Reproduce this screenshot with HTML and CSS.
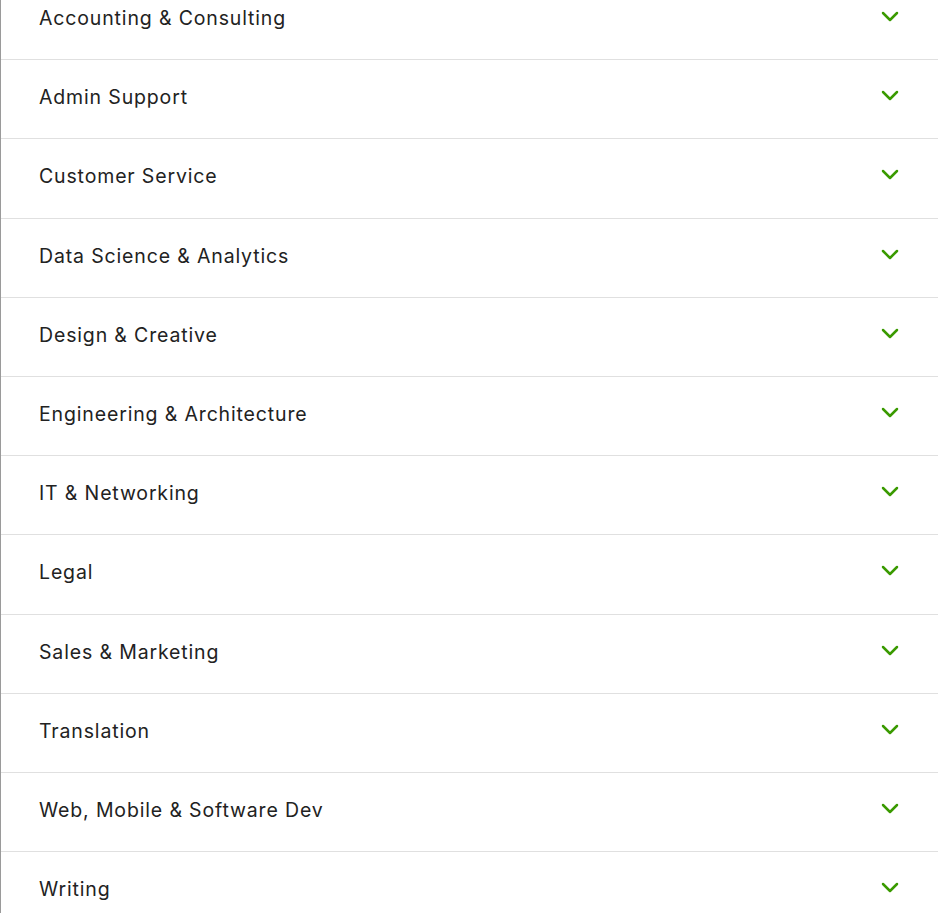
FILE: index.html
```html
<!DOCTYPE html>
<html lang="en">
<head>
  <meta charset="UTF-8">
  <title>Categories</title>
  <link rel="stylesheet" href="styles.css">
</head>
<body>

  <div class="categories">
    <div class="category">
      <span class="category-name">Accounting &amp; Consulting</span>
      <svg class="chevron" viewBox="0 0 18 11"><path d="M2 2 L9 9 L16 2"/></svg>
    </div>
    <div class="category">
      <span class="category-name">Admin Support</span>
      <svg class="chevron" viewBox="0 0 18 11"><path d="M2 2 L9 9 L16 2"/></svg>
    </div>
    <div class="category">
      <span class="category-name">Customer Service</span>
      <svg class="chevron" viewBox="0 0 18 11"><path d="M2 2 L9 9 L16 2"/></svg>
    </div>
    <div class="category">
      <span class="category-name">Data Science &amp; Analytics</span>
      <svg class="chevron" viewBox="0 0 18 11"><path d="M2 2 L9 9 L16 2"/></svg>
    </div>
    <div class="category">
      <span class="category-name">Design &amp; Creative</span>
      <svg class="chevron" viewBox="0 0 18 11"><path d="M2 2 L9 9 L16 2"/></svg>
    </div>
    <div class="category">
      <span class="category-name">Engineering &amp; Architecture</span>
      <svg class="chevron" viewBox="0 0 18 11"><path d="M2 2 L9 9 L16 2"/></svg>
    </div>
    <div class="category">
      <span class="category-name">IT &amp; Networking</span>
      <svg class="chevron" viewBox="0 0 18 11"><path d="M2 2 L9 9 L16 2"/></svg>
    </div>
    <div class="category">
      <span class="category-name">Legal</span>
      <svg class="chevron" viewBox="0 0 18 11"><path d="M2 2 L9 9 L16 2"/></svg>
    </div>
    <div class="category">
      <span class="category-name">Sales &amp; Marketing</span>
      <svg class="chevron" viewBox="0 0 18 11"><path d="M2 2 L9 9 L16 2"/></svg>
    </div>
    <div class="category">
      <span class="category-name">Translation</span>
      <svg class="chevron" viewBox="0 0 18 11"><path d="M2 2 L9 9 L16 2"/></svg>
    </div>
    <div class="category">
      <span class="category-name">Web, Mobile &amp; Software Dev</span>
      <svg class="chevron" viewBox="0 0 18 11"><path d="M2 2 L9 9 L16 2"/></svg>
    </div>
    <div class="category">
      <span class="category-name">Writing</span>
      <svg class="chevron" viewBox="0 0 18 11"><path d="M2 2 L9 9 L16 2"/></svg>
    </div>
  </div>

</body>
</html>
```

FILE: styles.css
```css
* {
  box-sizing: border-box;
}

body {
  margin: 0;
  padding: 0;
  background: #fff;
  font-family: Inter, "Noto Sans", sans-serif;
  color: #222;
  overflow: hidden;
}

.categories {
  margin-top: -19px;
  border-left: 1px solid #9a9a9a;
}

.category {
  display: flex;
  align-items: center;
  justify-content: space-between;
  padding: 25px 39px 25px 38px;
  height: 79.2px;
  border-bottom: 1px solid #e0e0e0;
}

.category-name {
  font-size: 19.5px;
  line-height: 28px;
  letter-spacing: 0.85px;
  padding-bottom: 4px;
}

.chevron {
  width: 18px;
  height: 11px;
  margin-top: -7px;
  fill: none;
  stroke: #3a9a00;
  stroke-width: 2.5;
  stroke-linecap: round;
  stroke-linejoin: round;
}
```
